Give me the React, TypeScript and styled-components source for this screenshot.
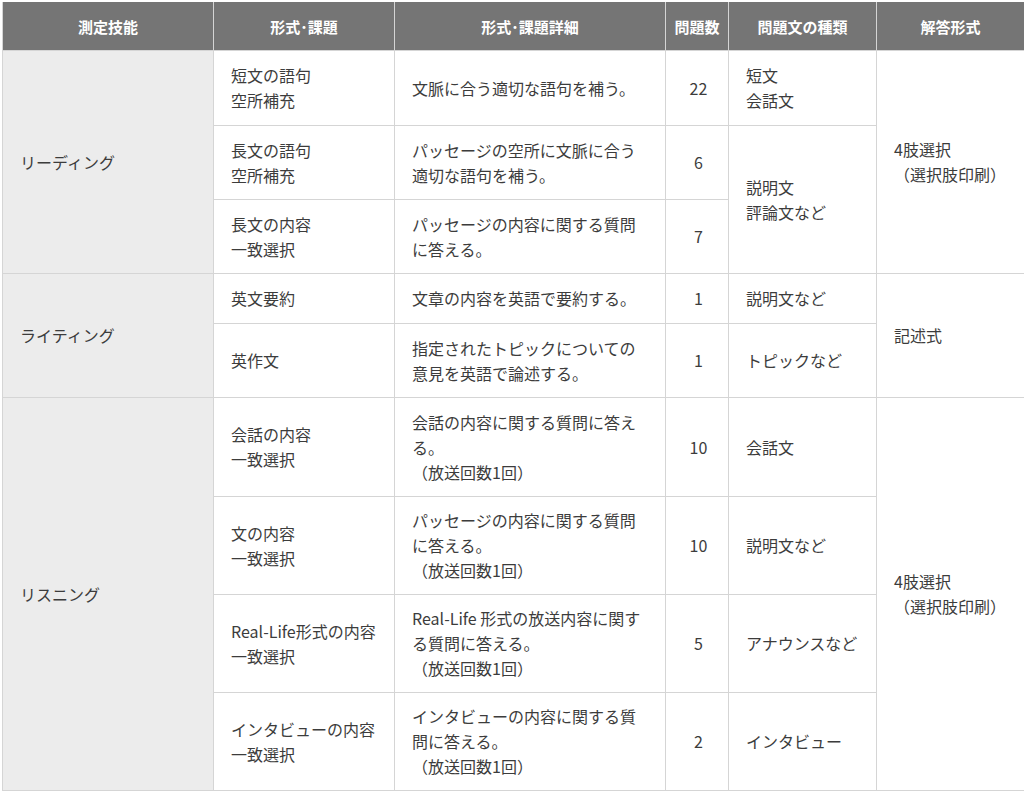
import React from "react";
import styled, { createGlobalStyle } from "styled-components";

const Global = createGlobalStyle`
  body {
    margin: 0;
    background: #fff;
    font-family: "Noto Sans CJK JP", "Noto Sans", sans-serif;
    color: #3c3c3c;
  }
`;

const Table = styled.table`
  margin: 2px 0 0 2px;
  width: 1022px;
  border-collapse: collapse;
  table-layout: fixed;
  font-size: 16px;
  line-height: 25px;
`;

const Th = styled.th`
  background: #757575;
  color: #fff;
  font-size: 15px;
  font-weight: 700;
  height: 48px;
  border: 1px solid #d5d5d5;
  border-top: none;
  padding: 0;
`;

const Td = styled.td<{ $center?: boolean; $grey?: boolean }>`
  border: 1px solid #d5d5d5;
  padding: 0 14px 0 17px;
  vertical-align: middle;
  text-align: ${(p) => (p.$center ? "center" : "left")};
  background: ${(p) => (p.$grey ? "#ececec" : "#fff")};
`;

const Tr = styled.tr<{ $h: number }>`
  height: ${(p) => p.$h}px;
`;

const answer = (
  <>
    4肢選択
    <br />
    （選択肢印刷）
  </>
);

export default function App() {
  return (
    <>
      <Global />
      <Table>
        <colgroup>
          <col style={{ width: 211 }} />
          <col style={{ width: 181 }} />
          <col style={{ width: 271 }} />
          <col style={{ width: 63 }} />
          <col style={{ width: 148 }} />
          <col style={{ width: 148 }} />
        </colgroup>
        <thead>
          <tr>
            <Th>測定技能</Th>
            <Th>形式･課題</Th>
            <Th>形式･課題詳細</Th>
            <Th>問題数</Th>
            <Th>問題文の種類</Th>
            <Th>解答形式</Th>
          </tr>
        </thead>
        <tbody>
          <Tr $h={75}>
            <Td $grey rowSpan={3}>リーディング</Td>
            <Td>短文の語句<br />空所補充</Td>
            <Td>文脈に合う適切な語句を補う。</Td>
            <Td $center>22</Td>
            <Td>短文<br />会話文</Td>
            <Td rowSpan={3}>{answer}</Td>
          </Tr>
          <Tr $h={74}>
            <Td>長文の語句<br />空所補充</Td>
            <Td>パッセージの空所に文脈に合う適切な語句を補う。</Td>
            <Td $center>6</Td>
            <Td rowSpan={2}>説明文<br />評論文など</Td>
          </Tr>
          <Tr $h={74}>
            <Td>長文の内容<br />一致選択</Td>
            <Td>パッセージの内容に関する質問に答える。</Td>
            <Td $center>7</Td>
          </Tr>
          <Tr $h={50}>
            <Td $grey rowSpan={2}>ライティング</Td>
            <Td>英文要約</Td>
            <Td>文章の内容を英語で要約する。</Td>
            <Td $center>1</Td>
            <Td>説明文など</Td>
            <Td rowSpan={2}>記述式</Td>
          </Tr>
          <Tr $h={74}>
            <Td>英作文</Td>
            <Td>指定されたトピックについての意見を英語で論述する。</Td>
            <Td $center>1</Td>
            <Td>トピックなど</Td>
          </Tr>
          <Tr $h={99}>
            <Td $grey rowSpan={4}>リスニング</Td>
            <Td>会話の内容<br />一致選択</Td>
            <Td>会話の内容に関する質問に答える。<br />（放送回数1回）</Td>
            <Td $center>10</Td>
            <Td>会話文</Td>
            <Td rowSpan={4}>{answer}</Td>
          </Tr>
          <Tr $h={98}>
            <Td>文の内容<br />一致選択</Td>
            <Td>パッセージの内容に関する質問に答える。<br />（放送回数1回）</Td>
            <Td $center>10</Td>
            <Td>説明文など</Td>
          </Tr>
          <Tr $h={98}>
            <Td>Real-Life形式の内容<br />一致選択</Td>
            <Td>Real-Life 形式の放送内容に関する質問に答える。<br />（放送回数1回）</Td>
            <Td $center>5</Td>
            <Td>アナウンスなど</Td>
          </Tr>
          <Tr $h={98}>
            <Td>インタビューの内容<br />一致選択</Td>
            <Td>インタビューの内容に関する質問に答える。<br />（放送回数1回）</Td>
            <Td $center>2</Td>
            <Td>インタビュー</Td>
          </Tr>
        </tbody>
      </Table>
    </>
  );
}
